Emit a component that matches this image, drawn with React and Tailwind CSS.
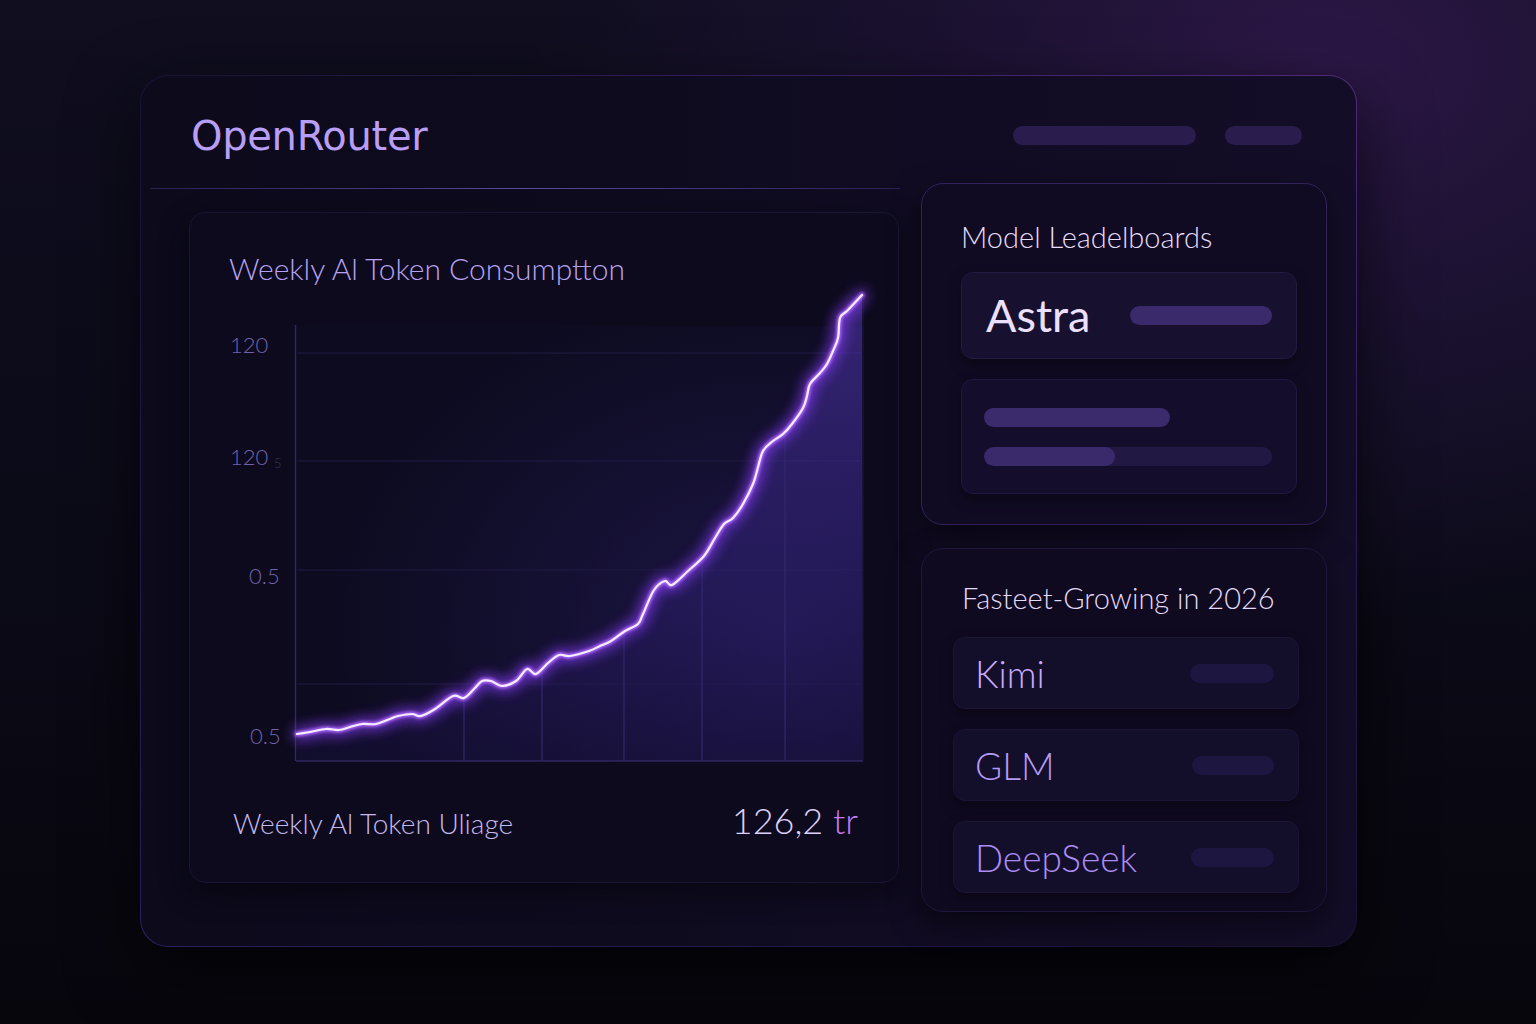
import React from "react";

// weekly token line, page coordinates
const points = [
  [297, 733], [310, 731], [326, 728], [339, 729], [350, 726], [362, 723], [376, 723],
  [390, 718], [398, 715], [412, 713], [421, 715], [435, 708], [453, 695], [464, 697],
  [474, 688], [482, 680], [491, 680], [502, 685], [516, 680], [527, 668], [536, 673],
  [548, 662], [559, 654], [570, 655], [589, 650], [600, 645], [611, 640], [625, 630],
  [638, 623], [643, 613], [654, 589], [665, 580], [672, 584], [688, 570], [704, 555],
  [715, 537], [724, 523], [733, 517], [743, 503], [753, 483], [757, 470], [763, 450],
  [773, 440], [783, 433], [792, 423], [803, 407], [807, 395], [810, 383], [820, 372],
  [827, 363], [833, 350], [838, 337], [840, 317], [847, 310], [862, 294],
];

const smooth = (p) => {
  let d = `M${p[0][0]},${p[0][1]}`;
  for (let i = 0; i < p.length - 1; i++) {
    const p0 = p[i - 1] || p[i];
    const p1 = p[i];
    const p2 = p[i + 1];
    const p3 = p[i + 2] || p2;
    const c1x = p1[0] + (p2[0] - p0[0]) / 6;
    const c1y = p1[1] + (p2[1] - p0[1]) / 6;
    const c2x = p2[0] - (p3[0] - p1[0]) / 6;
    const c2y = p2[1] - (p3[1] - p1[1]) / 6;
    d += ` C${c1x.toFixed(1)},${c1y.toFixed(1)} ${c2x.toFixed(1)},${c2y.toFixed(1)} ${p2[0]},${p2[1]}`;
  }
  return d;
};

const line = smooth(points);
const area = `${line} L862,760 L297,760 Z`;

const Chart = () => (
  <svg width="710" height="480" viewBox="189 285 710 480" className="block overflow-visible">
    <defs>
      <linearGradient id="fill" x1="0" y1="0" x2="0" y2="1">
        <stop offset="0%" stopColor="#6a45e0" stopOpacity="0.45" />
        <stop offset="60%" stopColor="#3f2a9a" stopOpacity="0.3" />
        <stop offset="100%" stopColor="#241660" stopOpacity="0.2" />
      </linearGradient>
      <radialGradient id="plot" cx="0.85" cy="0.7" r="0.8">
        <stop offset="0%" stopColor="#1c1544" />
        <stop offset="100%" stopColor="#0d0b20" />
      </radialGradient>
      <clipPath id="under">
        <path d={area} />
      </clipPath>
      <filter id="glow" x="-20%" y="-20%" width="140%" height="140%">
        <feGaussianBlur stdDeviation="7" />
      </filter>
      <filter id="soft" x="-20%" y="-20%" width="140%" height="140%">
        <feGaussianBlur stdDeviation="1.6" />
      </filter>
    </defs>

    <rect x="296" y="325" width="567" height="435" fill="url(#plot)" />

    {/* grid */}
    {[352, 460, 569, 683].map((y) => (
      <line key={y} x1="297" x2="862" y1={y} y2={y} stroke="#211a44" strokeWidth="1.2" />
    ))}

    <path d={area} fill="url(#fill)" />
    <g clipPath="url(#under)">
      {[464, 542, 624, 702, 785].map((x) => (
        <line key={x} x1={x} x2={x} y1="290" y2="760" stroke="#33286c" strokeWidth="1.2" />
      ))}
    </g>

    {/* axes */}
    <line x1="295.5" x2="295.5" y1="324" y2="760" stroke="#2f2760" strokeWidth="1.5" />
    <line x1="296" x2="863" y1="760" y2="760" stroke="#2f2760" strokeWidth="1.5" />
    <line x1="863" x2="863" y1="300" y2="760" stroke="#1d1740" strokeWidth="1" />

    {/* labels */}
    <g fontFamily="Lato, sans-serif" fontWeight="300" fontSize="22" fill="#7262ab">
      <text x="230" y="352">120</text>
      <text x="230" y="464">120</text>
      <text x="274" y="467" fontSize="13" fill="#3b3366">5</text>
      <text x="249" y="583">0.5</text>
      <text x="250" y="743">0.5</text>
    </g>

    {/* glowing line */}
    <path d={line} fill="none" stroke="#8b3dff" strokeWidth="10" strokeLinecap="round" filter="url(#glow)" opacity="0.9" />
    <path d={line} fill="none" stroke="#b06bff" strokeWidth="5" strokeLinecap="round" filter="url(#soft)" />
    <path d={line} fill="none" stroke="#f6edff" strokeWidth="2.2" strokeLinecap="round" strokeLinejoin="round" />
  </svg>
);

const Pill = ({ className }) => <div className={`h-[19px] rounded-full ${className}`} />;

const GrowRow = ({ name, color, pill }) => (
  <div className="h-[72px] rounded-[12px] bg-[#130e2a] border border-[#1c1538] shadow-[0_6px_14px_rgba(0,0,0,0.35)] flex items-center justify-between pl-[21px] pr-[24px]">
    <span className={`text-[37px] leading-none font-light ${color}`}>{name}</span>
    <Pill className={`bg-[#1d1640] ${pill}`} />
  </div>
);

export default function App() {
  return (
    <div className="min-h-screen w-full bg-[radial-gradient(ellipse_1000px_700px_at_86%_6%,#2c1746_0%,#1a112f_40%,transparent_80%),linear-gradient(to_bottom,#100e1f,#0b0a17_55%,#07060d)] pt-[75px] pl-[140px] font-[Lato,sans-serif]">
      <div className="w-[1217px] h-[872px] rounded-[28px] p-px bg-linear-to-tr from-[#2a2060] via-[#181233] to-[#4c2c78] shadow-[0_24px_70px_rgba(0,0,0,0.65)]">
        <div className="w-full h-full rounded-[27px] bg-linear-to-r from-[#0c0a1b] via-[#0f0b20] to-[#140d28] flex flex-col">
          {/* header */}
          <div className="h-[107px] flex items-center justify-between pt-[12px] pl-[50px] pr-[54px]">
            <h1 className="text-[40px] leading-none text-[#b89ef6] font-['DejaVu_Sans',sans-serif] tracking-[-0.3px]">
              OpenRouter
            </h1>
            <div className="flex items-center gap-[29px]">
              <Pill className="w-[183px] bg-[#2a1d4e]" />
              <Pill className="w-[77px] bg-[#2a1d4e]" />
            </div>
          </div>

          <div className="flex pl-[9px]">
            {/* left column */}
            <div className="w-[750px] flex flex-col">
              <div className="mt-[5px] h-px w-[750px] bg-linear-to-r from-[#2a2150] via-[#5a4a99] to-[#2a2150]" />
              <div className="mt-[23px] ml-[39px] w-[710px] h-[671px] rounded-[16px] bg-[#0c0a1c] border border-[#1a1533] shadow-[0_10px_30px_rgba(0,0,0,0.45)] flex flex-col">
                <div className="pt-[37px] pl-[39px] text-[30px] leading-[36px] font-light text-[#b7a2f2]">
                  Weekly Al Token Consumptton
                </div>
                <div className="-ml-px">
                  <Chart />
                </div>
                <div className="flex items-baseline justify-between pl-[43px] pr-[40px] mt-[36px]">
                  <span className="text-[28px] leading-none font-light text-[#c6b9ef]">Weekly Al Token Uliage</span>
                  <span className="text-[36px] leading-none font-light text-[#ddd0fb]">
                    126,2 <span className="text-[#c47cf0]">tr</span>
                  </span>
                </div>
              </div>
            </div>

            {/* right column */}
            <div className="ml-[21px] w-[406px] flex flex-col gap-[23px]">
              <div className="h-[342px] rounded-[22px] border border-[#33225a] bg-[#100b22] shadow-[0_12px_30px_rgba(0,0,0,0.5)] pl-[39px] pr-[29px] pt-[38px]">
                <div className="text-[29px] leading-[30px] font-light text-[#e6ddf9]">Model Leadelboards</div>
                <div className="mt-[20px] h-[87px] rounded-[12px] bg-[#17102f] border border-[#221a40] shadow-[0_6px_14px_rgba(0,0,0,0.35)] flex items-center justify-between pl-[24px] pr-[24px]">
                  <span className="text-[45px] leading-none font-normal text-[#ece0ff]">Astra</span>
                  <Pill className="w-[142px] bg-[#3a2a6b]" />
                </div>
                <div className="mt-[20px] h-[115px] rounded-[12px] bg-[#140e2c] border border-[#1f1840] shadow-[0_6px_14px_rgba(0,0,0,0.35)] flex flex-col justify-center gap-[20px] pl-[22px] pr-[24px]">
                  <Pill className="w-[186px] bg-[#3b2b6d]" />
                  <div className="h-[19px] rounded-full bg-[#211944] overflow-hidden">
                    <div className="h-full w-[131px] rounded-full bg-[#3a2a6b]" />
                  </div>
                </div>
              </div>

              <div className="h-[364px] rounded-[22px] border border-[#1f173c] bg-[#0f0a20] shadow-[0_12px_30px_rgba(0,0,0,0.5)] pl-[31px] pr-[27px] pt-[34px]">
                <div className="pl-[9px] text-[29px] leading-[30px] font-light text-[#e3d9f8]">Fasteet-Growing in 2026</div>
                <div className="mt-[24px] flex flex-col gap-[20px]">
                  <GrowRow name="Kimi" color="text-[#caaafb]" pill="w-[84px]" />
                  <GrowRow name="GLM" color="text-[#b59bf2]" pill="w-[82px]" />
                  <GrowRow name="DeepSeek" color="text-[#ab8cf2]" pill="w-[83px]" />
                </div>
              </div>
            </div>
          </div>
        </div>
      </div>
    </div>
  );
}
